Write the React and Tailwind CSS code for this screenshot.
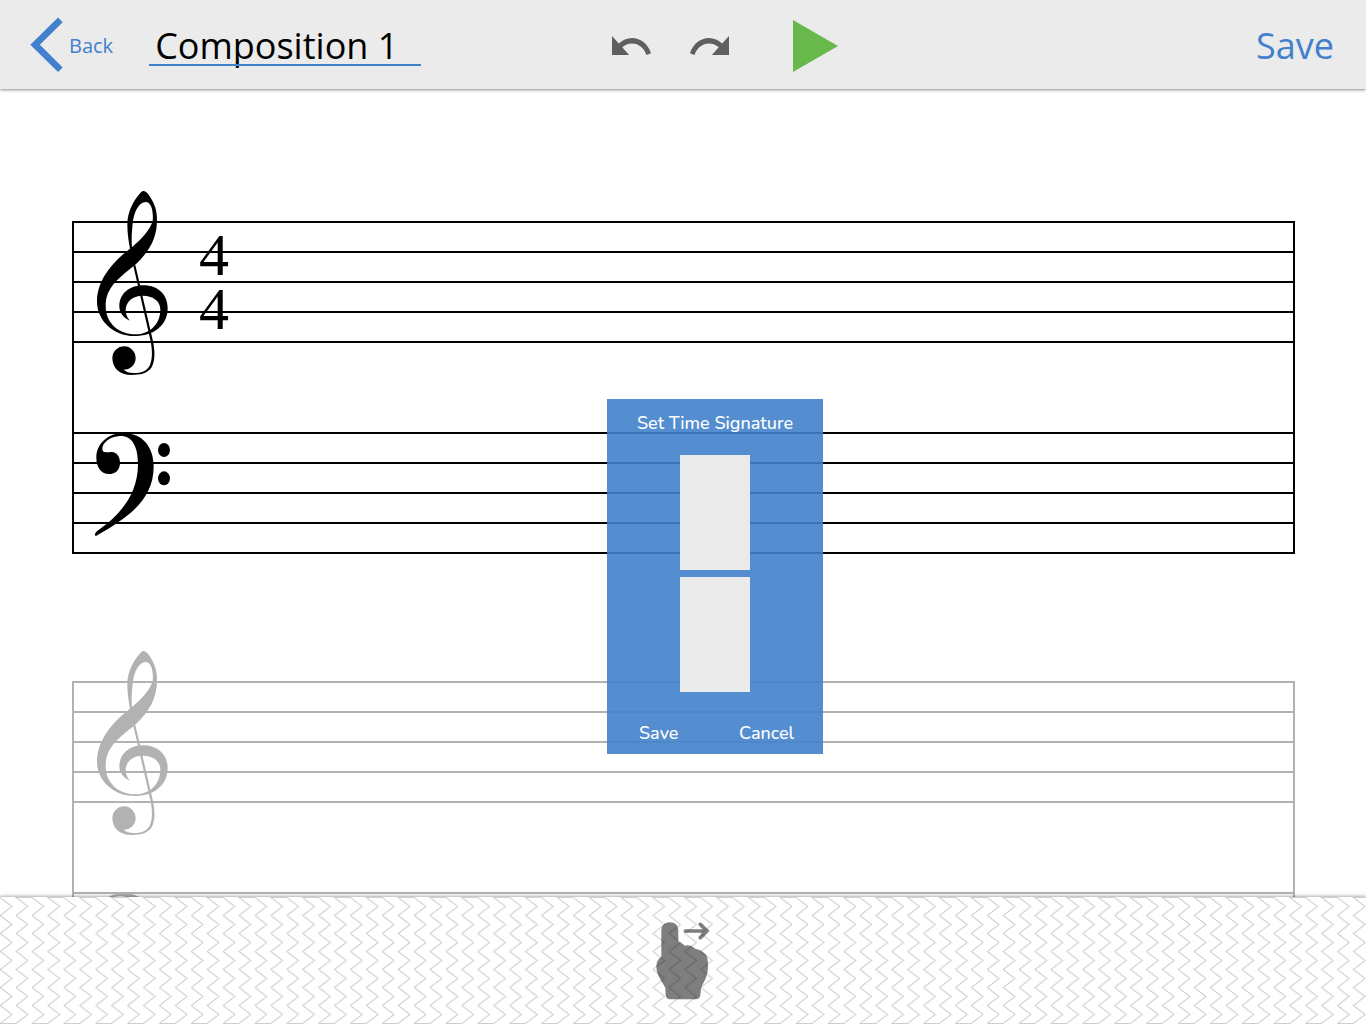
import React from "react";

function TrebleClef() {
  return (
    <svg viewBox="108 30 219 558" className="absolute left-[22px] -top-[31px] h-[186px] w-[73px]" fill="currentColor" role="img" aria-label="Treble clef">
      <path
        fillRule="evenodd"
        d="M251 33C258 33 264 41 270 50C283 71 291 88 291 120C291 175 268 215 224 256C172 297 137 325 137 378C137 430 177 463 226 463C270 463 301 431 301 389C301 362 278 347 248 347C216 347 197 367 197 391C197 404 202 414 210 422C191 415 178 399 178 379C178 342 207 316 250 316C297 316 323 347 323 384C323 438 279 468 223 468C159 468 111 420 111 365C111 302 155 248 210 206C205 180 202 158 202 132C203 92 222 60 243 37C246 34 248 33 251 33ZM257 66C237 66 221 97 218 131C215 160 214 180 216 202C245 177 269 151 278 124C281 91 273 66 257 66Z"
      />
      <path d="M220 257L226 255L279 484C285 515 286 540 275 562C262 581 241 585 215 585C178 585 157 563 157 533A35 35 0 1 1 190 569C198 575 208 579 220 579C244 579 260 573 269 557C278 538 277 512 272 484Z" />
    </svg>
  );
}

function BassClef() {
  return (
    <svg viewBox="102 51 231 315" className="absolute left-5 top-0 h-[105px] w-[77px]" fill="currentColor" role="img" aria-label="Bass clef">
      <path d="M105 358C107 348 126 339 146 322C194 280 234 226 234 147C234 92 215 62 180 63C150 64 126 84 127 103C129 116 139 111 155 111C172 112 180 127 180 143C180 165 166 177 147 177C122 177 109 155 109 128C109 85 145 54 191 54C246 54 281 95 281 154C281 252 211 304 108 363C105 363 105 361 105 358Z" />
      <ellipse cx="312" cy="105" rx="18" ry="21" />
      <ellipse cx="312" cy="190" rx="18" ry="21" />
    </svg>
  );
}

function Staff({ children }) {
  return (
    <div className="relative">
      <div className="h-[30px] border-t-2 border-current" />
      <div className="h-[30px] border-t-2 border-current" />
      <div className="h-[30px] border-t-2 border-current" />
      <div className="h-8 border-y-2 border-current" />
      {children}
    </div>
  );
}

function GrandStaff({ className, beats }) {
  return (
    <section className={`flex shrink-0 flex-col gap-[89px] border-x-2 border-current ${className}`}>
      <Staff>
        <TrebleClef />
        {beats && (
          <p className="absolute left-[125px] top-[7px] font-['Liberation_Serif',serif] text-[60px] leading-[54px]">
            {beats[0]}
            <br />
            {beats[1]}
          </p>
        )}
      </Staff>
      <Staff>
        <BassClef />
      </Staff>
    </section>
  );
}

function Header() {
  return (
    <header className="relative z-10 grid h-[89px] shrink-0 grid-cols-[1fr_auto_1fr] items-center bg-[#ebebeb] pl-[30px] pr-8 pt-0.5 shadow-[0_1px_3px_rgba(0,0,0,0.45)]">
      <div className="flex items-center gap-9">
        <button className="flex items-center gap-1.5 text-xl text-[#4280ce]">
          <svg viewBox="90 50 100 168" className="-mt-0.5 h-14 w-[33px]" fill="currentColor" aria-hidden="true">
            <path d="M175 51L189 65L120 133L189 202L175 216L91 133Z" />
          </svg>
          Back
        </button>
        <label className="relative block w-[272px] after:absolute after:inset-x-0 after:bottom-1 after:h-0.5 after:bg-[#4280ce]">
          <input
            type="text"
            aria-label="Composition title"
            defaultValue="Composition 1"
            className="block h-12 w-full bg-transparent pl-1.5 text-4xl text-black outline-none"
          />
        </label>
      </div>
      <div className="ml-[85px] flex items-center text-[#5f5f5f]">
        <button aria-label="Undo" className="mr-[39px]">
          <svg viewBox="2 7 20.47 9" preserveAspectRatio="none" className="h-[19px] w-[39px]" fill="currentColor">
            <path d="M12.5 8c-2.65 0-5.05.99-6.9 2.6L2 7v9h9l-3.62-3.62c1.39-1.16 3.16-1.88 5.12-1.88 3.54 0 6.55 2.31 7.6 5.5l2.37-.78C21.08 11.03 17.15 8 12.5 8z" />
          </svg>
        </button>
        <button aria-label="Redo" className="mr-16">
          <svg viewBox="1.54 7 20.46 9" preserveAspectRatio="none" className="h-[19px] w-[39px]" fill="currentColor">
            <path d="M18.4 10.6C16.55 8.99 14.15 8 11.5 8c-4.65 0-8.58 3.03-9.96 7.22L3.9 16c1.05-3.19 4.05-5.5 7.6-5.5 1.95 0 3.73.72 5.12 1.88L13 16h9V7l-3.6 3.6z" />
          </svg>
        </button>
        <button aria-label="Play" className="text-[#69b84c]">
          <svg viewBox="0 0 45 52" className="h-[52px] w-[45px]" fill="currentColor">
            <path d="M0 0L45 26L0 52Z" />
          </svg>
        </button>
      </div>
      <button className="justify-self-end text-4xl text-[#4280ce]">Save</button>
    </header>
  );
}

function TimeSignatureDialog() {
  return (
    <form
      role="dialog"
      aria-labelledby="time-title"
      onSubmit={(e) => e.preventDefault()}
      className="absolute left-[607px] top-[310px] flex h-[355px] w-[216px] flex-col items-center bg-[#4181cb]/90 pt-3 font-[Nunito,Lato,sans-serif] text-lg leading-6 font-medium text-white"
    >
      <h2 id="time-title">Set Time Signature</h2>
      <div className="mt-5 flex flex-col gap-[7px]">
        <input type="text" aria-label="Beats per measure" className="h-[115px] w-[70px] bg-[#ebebeb] text-center text-6xl text-black outline-none" />
        <input type="text" aria-label="Beat unit" className="h-[115px] w-[70px] bg-[#ebebeb] text-center text-6xl text-black outline-none" />
      </div>
      <div className="mt-[29px] flex w-full justify-between pl-8 pr-[29px]">
        <button type="submit">Save</button>
        <button type="button">Cancel</button>
      </div>
    </form>
  );
}

function GestureBar() {
  return (
    <footer className="relative z-10 flex h-[127px] shrink-0 justify-center bg-white pt-[25px] shadow-[0_0_4px_rgba(0,0,0,0.5)]">
      <svg className="absolute inset-0 h-full w-full text-[#cecece]" aria-hidden="true">
        <defs>
          <pattern id="zigzag" width="31.84" height="127" patternUnits="userSpaceOnUse">
            <path
              fill="none"
              stroke="currentColor"
              d="M-16 126.5H0.2L12 117.5L0.2 108.5L12 99.5L0.2 90.5L12 81.5L0.2 72.5L12 63.5L0.2 54.5L12 45.5L0.2 36.5L12 27.5L0.2 18.5L12 9.5L0.2 .5H-16M32 .5H16.1L27.9 9.5L16.1 18.5L27.9 27.5L16.1 36.5L27.9 45.5L16.1 54.5L27.9 63.5L16.1 72.5L27.9 81.5L16.1 90.5L27.9 99.5L16.1 108.5L27.9 117.5L16.1 126.5H0.2"
            />
          </pattern>
        </defs>
        <rect width="100%" height="100%" fill="url(#zigzag)" />
      </svg>
      <button aria-label="Swipe right" className="relative h-[78px] w-[54px]">
        <svg viewBox="78 110 162 234" className="h-[78px] w-[54px] opacity-50">
          <path d="M94 137C94 120 105 111 120 111C135 111 145 120 145 137V170Q153 170 164 181Q180 176 196 190Q212 192 228 208Q234 218 234 241C234 276 220 289 213 309L211 330Q209 342 197 342H120Q108 341 107 328L106 307C97 290 79 270 79 241Q80 224 94 214Z" />
          <path d="M166 137H231M211 117L231 137L211 157" fill="none" stroke="black" strokeWidth="11" strokeLinecap="round" />
        </svg>
      </button>
    </footer>
  );
}

export default function App() {
  return (
    <div className="flex h-screen flex-col overflow-hidden bg-white font-['Open_Sans',sans-serif]">
      <Header />
      <main className="relative flex min-h-0 flex-1 flex-col gap-[127px] overflow-hidden pl-[72px] pr-[71px] pt-[132px]">
        <GrandStaff className="text-black" beats={["4", "4"]} />
        <GrandStaff className="text-[#b2b2b2]" />
        <TimeSignatureDialog />
      </main>
      <GestureBar />
    </div>
  );
}
